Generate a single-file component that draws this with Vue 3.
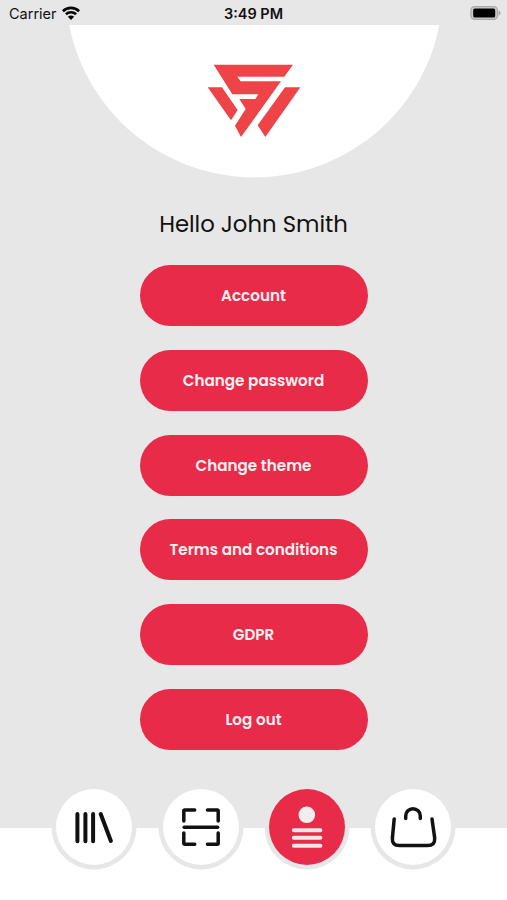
<template>
  <div class="screen">
    <header class="status-bar">
      <div class="carrier">
        <span class="carrier-name">Carrier</span>
        <svg class="wifi" viewBox="0 0 18 14">
          <g fill="none" stroke="#080808" stroke-width="2.6">
            <path d="M0.9 5.2A11.6 11.6 0 0 1 17.1 5.2" />
            <path d="M3.9 8.3A7.3 7.3 0 0 1 14.1 8.3" />
          </g>
          <path d="M9 13.9L5.9 10.8A4.4 4.4 0 0 1 12.1 10.8Z" fill="#080808" />
        </svg>
      </div>
      <span class="time">3:49 PM</span>
      <div class="battery-wrap">
        <svg class="battery" viewBox="0 0 31 14">
          <rect x="0.9" y="0.7" width="26.6" height="12.6" rx="3.8" fill="#ccc" stroke="#a9a9a9" stroke-width="1.3" />
          <rect x="3.2" y="2.6" width="22" height="8.8" rx="1.5" fill="#000" />
          <path d="M28.7 4.6Q30.6 5.3 30.6 7Q30.6 8.7 28.7 9.4Z" fill="#a5a5a5" />
        </svg>
      </div>
    </header>

    <section class="hero">
      <svg class="hero-shape" viewBox="0 0 507 153">
        <circle cx="254.3" cy="-36.2" r="188.6" fill="#fff" />
      </svg>
      <svg class="logo" viewBox="0 0 360 270">
        <g fill="#ee4347">
          <path d="M56 29H294L268 65H127L137 79H258L138 246L120 212L152 162L133 132H181L190 118H112Z" />
          <path d="M38 97H81L128 165L108 196Z" />
          <path d="M270 97H316L211 246L188 211Z" />
        </g>
      </svg>
    </section>

    <h1 class="greeting">Hello John Smith</h1>

    <main class="menu">
      <button v-for="item in items" :key="item" class="menu-button">{{ item }}</button>
    </main>

    <nav class="tabs">
      <button v-for="tab in tabs" :key="tab" class="tab" :class="{ active: tab === current }" @click="current = tab">
        <svg v-if="tab === 'library'" viewBox="0 0 76 76">
          <g fill="none" stroke="#111" stroke-width="4" stroke-linecap="round">
            <path d="M21.4 25V52.2M29.4 25V52.2M37.1 25V52.2M44.7 25L54.9 52" />
          </g>
        </svg>
        <svg v-else-if="tab === 'scan'" viewBox="0 0 76 76">
          <g fill="none" stroke="#111" stroke-width="3.5" stroke-linecap="round" stroke-linejoin="round">
            <path d="M20.8 32V22Q20.8 21 21.8 21H31.7" />
            <path d="M44.5 21H54.2Q55.2 21 55.2 22V32" />
            <path d="M20.8 44V54Q20.8 55.3 22.1 55.3H31.7" />
            <path d="M44.5 55.3H54.2Q55.2 55.3 55.2 54.3V44" />
            <path d="M21.2 38.2H54.6" />
          </g>
        </svg>
        <svg v-else-if="tab === 'profile'" viewBox="0 0 76 76">
          <circle cx="37.8" cy="25.8" r="8.3" fill="#eee" />
          <path d="M24.8 41.2H51.4M24.8 48.8H51.4M24.8 56.7H51.4" fill="none" stroke="#f5e6e9" stroke-width="4" stroke-linecap="round" />
        </svg>
        <svg v-else viewBox="0 0 76 76">
          <g fill="none" stroke="#111" stroke-width="3.5" stroke-linecap="round" stroke-linejoin="round">
            <path d="M19.2 29.9L17.4 49Q16.9 56.6 24.3 56.6H52.5Q60.2 56.6 59.7 49L57 29.9" />
            <path d="M30.7 29.6V27A7.3 7.3 0 0 1 45.3 27V29.6" />
          </g>
        </svg>
      </button>
    </nav>
  </div>
</template>

<script setup>
import { ref } from 'vue'

const items = ['Account', 'Change password', 'Change theme', 'Terms and conditions', 'GDPR', 'Log out']
const tabs = ['library', 'scan', 'profile', 'bag']
const current = ref('profile')
</script>

<style>
body {
  margin: 0;
}
</style>

<style scoped>
.screen {
  width: 507px;
  height: 900px;
  overflow: hidden;
  display: flex;
  flex-direction: column;
  background: linear-gradient(#e7e7e7 828px, #fff 828px);
  font-family: Poppins, Inter, sans-serif;
  color: #111;
}

.status-bar {
  display: grid;
  grid-template-columns: 1fr auto 1fr;
  align-items: center;
  height: 25px;
  flex-shrink: 0;
  padding: 0 6px 0 9px;
  box-sizing: border-box;
  font-family: Inter, sans-serif;
  font-size: 14.5px;
}

.carrier {
  display: flex;
  align-items: center;
  gap: 5px;
  padding-top: 2px;
}

.wifi {
  width: 18px;
  height: 14px;
  margin-bottom: 2px;
}

.time {
  padding: 2px 3px 0 0;
  font-weight: 600;
}

.battery-wrap {
  display: flex;
  justify-content: flex-end;
  padding-top: 1px;
}

.battery {
  width: 31px;
  height: 14px;
}

.hero {
  display: grid;
  height: 153px;
  flex-shrink: 0;
}

.hero-shape,
.logo {
  grid-area: 1 / 1;
}

.hero-shape {
  width: 507px;
  height: 153px;
}

.logo {
  width: 120px;
  height: 90px;
  margin: 30px 0 0 195px;
}

.greeting {
  margin: 28px 0 0;
  height: 36px;
  line-height: 36px;
  flex-shrink: 0;
  text-align: center;
  font-size: 22.75px;
  font-weight: 400;
}

.menu {
  display: flex;
  flex-direction: column;
  align-items: center;
  gap: 23.7px;
  margin-top: 23.4px;
}

.menu-button {
  width: 228px;
  height: 61px;
  padding: 0;
  border: 0;
  border-radius: 31px;
  background: #e72b49;
  color: #fff0f2;
  font-family: inherit;
  font-size: 15.2px;
  font-weight: 600;
}

.tabs {
  display: flex;
  gap: 30.3px;
  margin: 39px 0 0 56.4px;
}

.tab {
  width: 76px;
  height: 76px;
  padding: 0;
  flex-shrink: 0;
  display: flex;
  border: 0;
  border-radius: 50%;
  background: #fff;
  box-shadow: 0 0 0 4.6px #e7e7e7;
}

.tab.active {
  background: #e72b49;
}

.tab svg {
  width: 76px;
  height: 76px;
  flex-shrink: 0;
}
</style>
